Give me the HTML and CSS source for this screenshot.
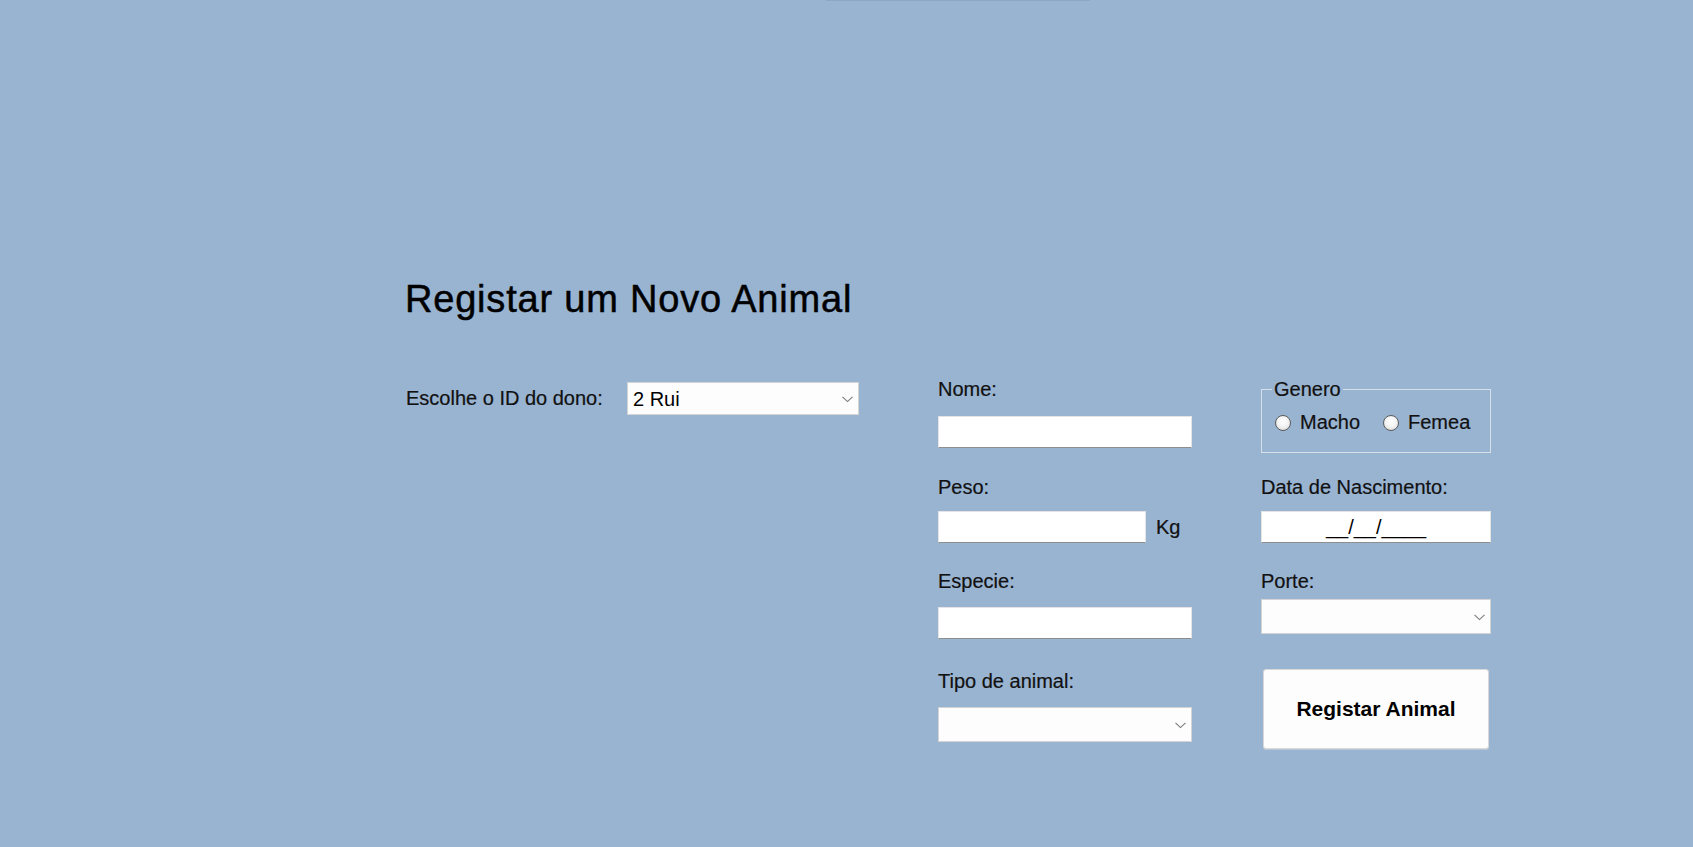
FILE: index.html
```html
<!DOCTYPE html>
<html lang="pt">
<head>
<meta charset="utf-8">
<title>Registar um Novo Animal</title>
<link rel="stylesheet" href="styles.css">
</head>
<body>
<div class="topline"></div>
<main class="page">
  <h1 class="title">Registar um Novo Animal</h1>
  <form class="form">
    <div class="col col-owner">
      <div class="owner-row">
        <label class="owner-label" for="dono">Escolhe o ID do dono:</label>
        <div class="select-wrap owner-select">
          <select id="dono" class="select"><option>2 Rui</option></select>
          <svg class="chev" width="11" height="7" viewBox="0 0 11 7"><path d="M0.5 0.8 L5.5 5.6 L10.5 0.8" fill="none" stroke="#7a7a7a" stroke-width="1.1"/></svg>
        </div>
      </div>
    </div>

    <div class="col col-mid">
      <div class="field f1">
        <label class="lbl" for="nome">Nome:</label>
        <input id="nome" class="input wide" type="text">
      </div>
      <div class="field f2">
        <label class="lbl" for="peso">Peso:</label>
        <div class="peso-row">
          <input id="peso" class="input peso" type="text">
          <span class="unit">Kg</span>
        </div>
      </div>
      <div class="field f3">
        <label class="lbl" for="especie">Especie:</label>
        <input id="especie" class="input wide" type="text">
      </div>
      <div class="field f4">
        <label class="lbl" for="tipo">Tipo de animal:</label>
        <div class="select-wrap wide">
          <select id="tipo" class="select"><option></option></select>
          <svg class="chev" width="11" height="7" viewBox="0 0 11 7"><path d="M0.5 0.8 L5.5 5.6 L10.5 0.8" fill="none" stroke="#7a7a7a" stroke-width="1.1"/></svg>
        </div>
      </div>
    </div>

    <div class="col col-right">
      <fieldset class="genero">
        <legend class="legend">Genero</legend>
        <div class="radios">
          <label class="radio"><input type="radio" name="genero" class="rb"><span>Macho</span></label>
          <label class="radio"><input type="radio" name="genero" class="rb"><span>Femea</span></label>
        </div>
      </fieldset>
      <div class="field r2">
        <label class="lbl" for="data">Data de Nascimento:</label>
        <input id="data" class="input date" type="text" value="__/__/____">
      </div>
      <div class="field r3">
        <label class="lbl" for="porte">Porte:</label>
        <div class="select-wrap porte">
          <select id="porte" class="select"><option></option></select>
          <svg class="chev" width="11" height="7" viewBox="0 0 11 7"><path d="M0.5 0.8 L5.5 5.6 L10.5 0.8" fill="none" stroke="#7a7a7a" stroke-width="1.1"/></svg>
        </div>
      </div>
      <button type="button" class="btn">Registar Animal</button>
    </div>
  </form>
</main>
</body>
</html>
```

FILE: styles.css
```css
html, body {
  margin: 0;
  padding: 0;
  background: #99b4d1;
  height: 847px;
  overflow: hidden;
}
body {
  font-family: "Liberation Sans", Arial, sans-serif;
  color: #111;
}
.topline {
  margin-left: 826px;
  width: 264px;
  height: 1px;
  background: #8ca6c3;
}
.page {
  padding-left: 405px;
}
.title {
  margin: 276px 0 0 0;
  font-size: 38px;
  line-height: 44px;
  font-weight: normal;
  letter-spacing: 0.8px;
  color: #000;
  -webkit-text-stroke: 0.5px #000;
}
.form {
  display: flex;
  margin-top: 57px;
}
.col {
  display: flex;
  flex-direction: column;
}
.col-owner {
  width: 454px;
  margin-top: 4px;
}
.owner-row {
  display: flex;
  align-items: center;
}
.owner-label {
  width: 222px;
  padding-left: 1px;
  box-sizing: border-box;
  font-size: 20px;
  line-height: 23px;
  -webkit-text-stroke: 0.2px #111;
}
.col-mid {
  margin-left: 79px;
  width: 254px;
}
.col-right {
  margin-left: 69px;
  width: 230px;
}
.lbl {
  display: block;
  font-size: 20px;
  line-height: 23px;
  -webkit-text-stroke: 0.2px #111;
}
.field {
  display: flex;
  flex-direction: column;
  align-items: flex-start;
}
.input {
  box-sizing: border-box;
  height: 32px;
  border: 1px solid #e4e4e4;
  border-bottom: 1px solid #8e8e8e;
  background: #fff;
  font-family: "Liberation Sans", Arial, sans-serif;
  font-size: 20px;
  padding: 0 4px;
  margin: 0;
  outline: none;
}
.wide { width: 254px; }
.f1 .input { margin-top: 15px; }
.f2 { margin-top: 28px; }
.f2 .peso-row { margin-top: 12px; }
.f3 { margin-top: 27px; }
.f3 .input { margin-top: 14px; }
.f4 { margin-top: 31px; }
.f4 .select-wrap { margin-top: 14px; height: 35px; }
.peso-row {
  display: flex;
  align-items: center;
}
.peso { width: 208px; }
.unit {
  margin-left: 10px;
  font-size: 20px;
  line-height: 23px;
  -webkit-text-stroke: 0.2px #111;
}
.select-wrap {
  position: relative;
  box-sizing: border-box;
  height: 33px;
}
.owner-select { width: 232px; }
.porte { width: 230px; height: 35px; margin-top: 6px; }
.select {
  appearance: none;
  -webkit-appearance: none;
  box-sizing: border-box;
  width: 100%;
  height: 100%;
  margin: 0;
  border: 1px solid #d4d4d4;
  border-radius: 0;
  background: #fdfdfd;
  font-family: "Liberation Sans", Arial, sans-serif;
  font-size: 20px;
  color: #000;
  padding: 0 24px 0 5px;
  outline: none;
}
.chev {
  position: absolute;
  right: 6px;
  top: 50%;
  margin-top: -3px;
  pointer-events: none;
}
.genero {
  box-sizing: border-box;
  margin: 0;
  padding: 0 10px;
  height: 75px;
  border: 1px solid #d6e0ea;
  min-width: 0;
}
.legend {
  padding: 0 2px;
  font-size: 20px;
  line-height: 23px;
  -webkit-text-stroke: 0.2px #111;
}
.radios {
  display: flex;
  align-items: center;
  margin-top: 10px;
  margin-left: 3px;
}
.radio {
  display: flex;
  align-items: center;
  font-size: 20px;
  line-height: 23px;
  -webkit-text-stroke: 0.2px #111;
}
.radio + .radio { margin-left: 23px; }
.rb {
  appearance: none;
  -webkit-appearance: none;
  width: 16px;
  height: 16px;
  margin: 0 9px 0 0;
  border-radius: 50%;
  border: 1px solid #5c5c5c;
  background: radial-gradient(circle at 50% 40%, #ffffff 0%, #f4f4f4 45%, #d2d2d2 100%);
  box-sizing: border-box;
}
.r2 { margin-top: 23px; }
.r2 .input { margin-top: 12px; }
.date {
  width: 230px;
  text-align: center;
  color: #000;
}
.r3 { margin-top: 27px; }
.btn {
  margin-top: 35px;
  margin-left: 2px;
  width: 226px;
  height: 80px;
  border: 1px solid #d8d8d8;
  border-radius: 3px;
  background: #fdfdfd;
  font-family: "Liberation Sans", Arial, sans-serif;
  font-size: 21px;
  font-weight: bold;
  color: #000;
  padding: 0 0 1px 0;
  box-shadow: 0 1px 0 #b9c8d8;
}
```
